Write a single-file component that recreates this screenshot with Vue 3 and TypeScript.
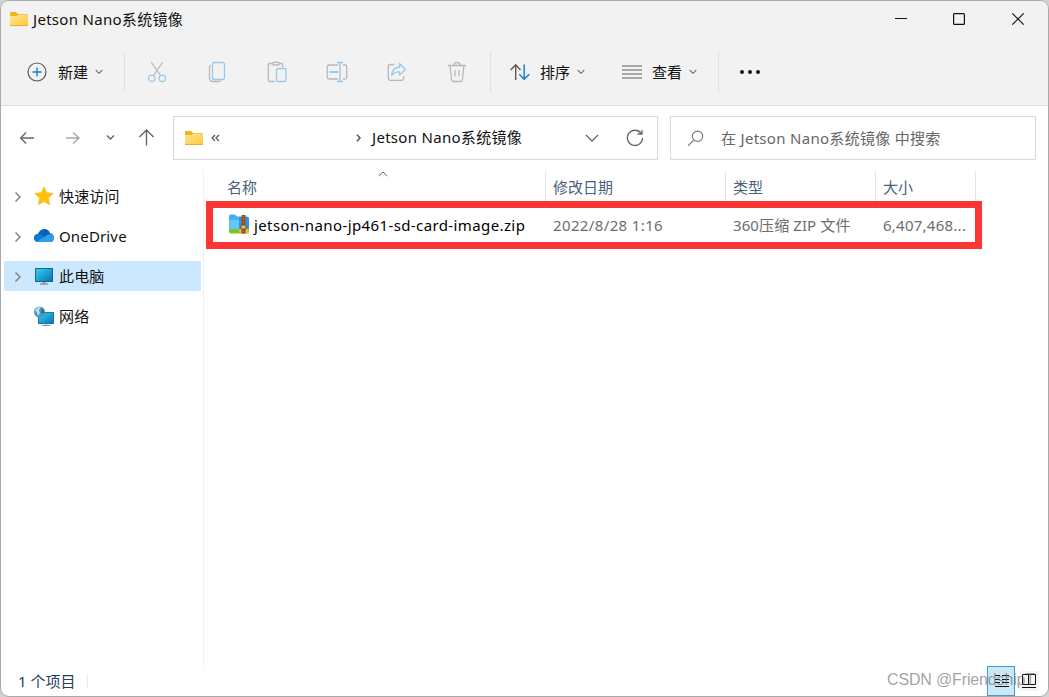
<script setup lang="ts">
interface Place {
  id: string
  label: string
  expandable: boolean
  selected?: boolean
}

const places: Place[] = [
  { id: 'star', label: '快速访问', expandable: true },
  { id: 'cloud', label: 'OneDrive', expandable: true },
  { id: 'pc', label: '此电脑', expandable: true, selected: true },
  { id: 'network', label: '网络', expandable: false },
]
</script>

<template>
  <div class="window">
    <header class="header">
      <div class="titlebar">
        <svg class="folder" width="18" height="16" viewBox="0 0 18 16">
          <path d="M0 2Q0 1 1 1H6L8 3H17Q18 3 18 4V14Q18 15 17 15H1Q0 15 0 14Z" fill="#f5b01d" />
          <path d="M0 5H6.500L8.500 3.500H18V14H0Z" fill="url(#folderFill)" />
          <path d="M0 14.500H18" stroke="#e9ad30" />
          <defs>
            <linearGradient id="folderFill" x1="0" y1="0" x2="1" y2="1">
              <stop offset="0" stop-color="#ffe79a" />
              <stop offset="1" stop-color="#ffc93a" />
            </linearGradient>
          </defs>
        </svg>
        <span class="title wide">Jetson Nano系统镜像</span>
        <svg class="controls" width="140" height="20" viewBox="0 0 140 20" fill="none" stroke="#111" stroke-width="1.200">
          <path d="M5 9.500H17" />
          <rect x="63.600" y="4.600" width="10.800" height="10.800" rx="1" />
          <path d="M122.300 4.300L133.700 15.700M133.700 4.300L122.300 15.700" />
        </svg>
      </div>
      <div class="toolbar">
        <div class="group new">
          <svg width="20" height="20" viewBox="0 0 20 20" fill="none">
            <circle cx="10" cy="10" r="9" stroke="#5b5b5b" stroke-width="1.200" />
            <path d="M10 5.500V14.500M5.500 10H14.500" stroke="#0f78cf" stroke-width="1.300" />
          </svg>
          <span>新建</span>
          <svg class="caret" width="8" height="6" viewBox="0 0 8 6"><path d="M.7 1L4 4.400L7.300 1" /></svg>
        </div>
        <i class="rule"></i>
        <div class="actions">
          <svg width="20" height="22" viewBox="0 0 20 22" fill="none" stroke-width="1.300">
            <path d="M4.200 1L13.500 14.500M15.800 1L6.500 14.500" stroke="#b9b9b9" />
            <g stroke="#98c9ed"><circle cx="4.700" cy="17.300" r="3.200" /><circle cx="15.300" cy="17.300" r="3.200" /></g>
          </svg>
          <svg width="20" height="22" viewBox="0 0 20 22" fill="none" stroke-width="1.300">
            <path d="M4 4Q2.500 4.500 2.500 6.500V17Q2.500 20.500 6 20.500H12Q13.500 20.500 14 19.500" stroke="#b9b9b9" />
            <rect x="5.500" y="1.500" width="12" height="17" rx="2" stroke="#98c9ed" />
          </svg>
          <svg width="20" height="22" viewBox="0 0 20 22" fill="none" stroke-width="1.300">
            <path d="M6 2.500H2.500Q1.300 2.500 1.300 4V19Q1.300 20.500 2.500 20.500H7.500M12 2.500H14.500Q15.700 2.500 15.700 4V6" stroke="#b9b9b9" />
            <rect x="5.500" y="1.300" width="7" height="2.700" rx="1.300" stroke="#b9b9b9" />
            <rect x="9.500" y="7.500" width="9.500" height="13" rx="1.500" stroke="#98c9ed" />
          </svg>
          <svg width="22" height="22" viewBox="0 0 22 22" fill="none" stroke-width="1.300">
            <path d="M12 4H3Q1.300 4 1.300 5.500V16.500Q1.300 18 3 18H12M17 4H19Q20.700 4 20.700 5.500V16.500Q20.700 18 19 18H17" stroke="#b9b9b9" />
            <path d="M14 1.500V20.500M11 1.500H17M11 20.500H17" stroke="#98c9ed" stroke-width="1.400" />
            <path d="M3.500 11H12" stroke="#98c9ed" stroke-width="2" />
          </svg>
          <svg width="20" height="22" viewBox="0 0 20 22" fill="none" stroke-width="1.300" stroke-linejoin="round">
            <path d="M7.500 3.500H3.500Q1.300 3.500 1.300 5.500V17Q1.300 19.300 3.500 19.300H14.500Q16.700 19.300 16.700 17V15" stroke="#b9b9b9" />
            <path d="M12.500 2.500L18.500 8.500L12.500 14V10.800Q8 10.500 4.700 14.500Q5.300 6.500 12.500 6Z" stroke="#98c9ed" />
          </svg>
          <svg width="20" height="22" viewBox="0 0 20 22" fill="none" stroke="#b9b9b9" stroke-width="1.300">
            <path d="M1 4.500H19M7 4Q7 1.500 10 1.500Q13 1.500 13 4M3 4.500L4.500 18.500Q4.700 20.500 6.500 20.500H13.500Q15.300 20.500 15.500 18.500L17 4.500M8 9V15.500M12 9V15.500" />
          </svg>
        </div>
        <i class="rule"></i>
        <div class="group sort">
          <svg width="20" height="20" viewBox="0 0 20 20" fill="none" stroke-width="1.400">
            <path d="M5.700 18V3M.7 8L5.700 2.700L10.500 8" stroke="#5b5b5b" />
            <path d="M14.200 2.500V17.300M9.300 12.300L14.200 17.300L19.300 12.300" stroke="#0f78cf" />
          </svg>
          <span>排序</span>
          <svg class="caret" width="8" height="6" viewBox="0 0 8 6"><path d="M.7 1L4 4.400L7.300 1" /></svg>
        </div>
        <div class="group view">
          <svg width="20" height="14" viewBox="0 0 20 14" stroke="#5b5b5b" stroke-width="1.200">
            <path d="M0 1H20M0 5H20M0 9H20M0 13H20" />
          </svg>
          <span>查看</span>
          <svg class="caret" width="8" height="6" viewBox="0 0 8 6"><path d="M.7 1L4 4.400L7.300 1" /></svg>
        </div>
        <i class="rule"></i>
        <svg class="more" width="22" height="6" viewBox="0 0 22 6" fill="#191919">
          <circle cx="3" cy="3" r="2" /><circle cx="11" cy="3" r="2" /><circle cx="19" cy="3" r="2" />
        </svg>
      </div>
    </header>

    <nav class="navbar">
      <svg class="arrows" width="136" height="20" viewBox="0 0 136 20" fill="none" stroke-width="1.400">
        <path d="M6 4.500L.7 10L6 15.500M.7 10H14" stroke="#666" />
        <path d="M53 4.500L59 10L53 15.500M59 10H46" stroke="#a6a6a6" />
        <path d="M87 7.500L90.500 11L94 7.500" stroke="#666" />
        <path d="M119.500 9L126.500 2L133.500 9M126.500 2V17.500" stroke="#666" />
      </svg>
      <div class="address">
        <svg class="folder" width="18" height="16" viewBox="0 0 18 16">
          <path d="M0 2Q0 1 1 1H6L8 3H17Q18 3 18 4V14Q18 15 17 15H1Q0 15 0 14Z" fill="#f5b01d" />
          <path d="M0 5H6.500L8.500 3.500H18V14H0Z" fill="url(#folderFill)" />
          <path d="M0 14.500H18" stroke="#e9ad30" />
        </svg>
        <svg class="chevrons" width="150" height="10" viewBox="0 0 150 10" fill="none" stroke="#555" stroke-width="1.200">
          <path d="M4 2L1 5L4 8M8 2L5 5L8 8" />
          <path d="M146 1.800L149 5L146 8.200" stroke-width="1.500" />
        </svg>
        <span class="crumb wide">Jetson Nano系统镜像</span>
        <svg class="refresh" width="60" height="20" viewBox="0 0 60 20" fill="none" stroke="#666" stroke-width="1.300">
          <path d="M1 7L7 13L13 7" />
          <path d="M56 5.200A7.600 7.600 0 1 0 57.600 10M57 2V6H52.500" />
        </svg>
      </div>
      <div class="search">
        <svg width="17" height="17" viewBox="0 0 17 17" fill="none" stroke="#777" stroke-width="1.100">
          <circle cx="10.500" cy="6.300" r="5.200" /><path d="M6.800 10L1 15.800" />
        </svg>
        <span class="wide">在 Jetson Nano系统镜像 中搜索</span>
      </div>
    </nav>

    <div class="body">
      <aside class="sidebar">
        <div v-for="place in places" :key="place.id" class="place" :class="{ selected: place.selected }">
          <svg class="expander" width="8" height="12" viewBox="0 0 8 12">
            <path v-if="place.expandable" d="M1.500 1.500L6 6L1.500 10.500" fill="none" stroke="#858585" stroke-width="1.500" />
          </svg>
          <svg v-if="place.id === 'star'" class="glyph" width="20" height="20" viewBox="0 0 20 20">
            <path d="M10 1L12.700 6.700L19 7.500L14.400 12L15.600 18.500L10 15.400L4.400 18.500L5.600 12L1 7.500L7.300 6.700Z" fill="#ffc20c" stroke="#fdb813" stroke-width=".8" stroke-linejoin="round" />
          </svg>
          <svg v-else-if="place.id === 'cloud'" class="glyph" width="20" height="20" viewBox="0 0 20 20">
            <path d="M4 16Q0 15.500 0 12Q0 8.500 4 8Q6 3 10.500 3Q14.500 3 16 7Q20 8 20 12Q20 16 16 16Z" fill="#0c5fbd" />
            <path d="M4 16Q0 15.500 0 12Q0 8 4.500 7.700Q8 7.500 13 13L6 16Z" fill="#087bd2" />
            <path d="M3 15.600L12 10Q15 7 18 8.700Q20 10 20 12.500Q19.500 16 16 16H5Z" fill="#2d9eea" />
          </svg>
          <svg v-else-if="place.id === 'pc'" class="glyph" width="20" height="20" viewBox="0 0 20 20">
            <defs>
              <linearGradient id="screenFill" x1="0" y1="0" x2="1" y2="1">
                <stop offset="0" stop-color="#35d5e5" /><stop offset="1" stop-color="#086fbd" />
              </linearGradient>
            </defs>
            <rect x="1.500" y="2.500" width="17" height="13" fill="url(#screenFill)" stroke="#146b91" />
            <path d="M8.500 16H11.500V17.500H8.500Z" fill="#8d999f" /><path d="M6 18H14" stroke="#65737b" />
          </svg>
          <svg v-else class="glyph" width="20" height="20" viewBox="0 0 20 20">
            <rect x="4.500" y="6.500" width="15" height="11" fill="url(#screenFill)" stroke="#137eae" />
            <path d="M12 18V19.500M8 19.500H16" stroke="#88949b" />
            <circle cx="5.500" cy="6" r="5.500" fill="#4b97bd" />
            <path d="M1 4Q4 0 7 1L5 4L6 7L4 10L3 7Z" fill="#b8d9e6" /><path d="M8 2Q11 5 10 8L7 7Z" fill="#29729c" />
          </svg>
          <span>{{ place.label }}</span>
        </div>
      </aside>

      <main class="files">
        <svg class="sorted" width="10" height="6" viewBox="0 0 10 6"><path d="M.7 5L5 1L9.300 5" fill="none" stroke="#666" /></svg>
        <div class="columns">
          <span>名称</span><span>修改日期</span><span>类型</span><span>大小</span>
        </div>
        <div class="row">
          <svg class="archive" width="21" height="20" viewBox="0 0 21 20">
            <path d="M0 2Q0 .5 1.500 .5H6L8 2.500H18Q20 2.500 20 4.500V16H0Z" fill="#46aff2" />
            <path d="M0 6H20V16H0Z" fill="#65c7f8" />
            <path d="M10 3H18Q20 3 20 5V16H10Z" fill="#2e93e6" />
            <path d="M0 15H20V17Q20 19.500 18 19.500H2Q0 19.500 0 17Z" fill="#79c52e" />
            <path d="M10 15H20V17Q20 19.500 18 19.500H10Z" fill="#f2b632" />
            <rect x="12.500" y="1" width="4" height="18.500" fill="#965021" />
            <path d="M14.500 2V19" stroke="#b9783c" stroke-dasharray="1 1.500" />
            <rect x="12" y="11" width="5" height="4" rx="1" fill="#e5bd75" stroke="#713d1c" stroke-width=".8" />
          </svg>
          <span class="name">jetson-nano-jp461-sd-card-image.zip</span>
          <span class="date">2022/8/28 1:16</span>
          <span class="type">360压缩 ZIP 文件</span>
          <span class="size">6,407,468...</span>
        </div>
      </main>
    </div>

    <footer class="status">
      <span>1 个项目</span>
      <i class="tick"></i>
      <div class="modes">
        <svg class="mode active" width="28" height="30" viewBox="0 0 28 30" stroke="#111">
          <rect x=".5" y=".5" width="27" height="29" fill="#cbe8f6" stroke="#3a9fd3" />
          <path d="M8 9.500H13M15 9.500H22M8 13.500H13M15 13.500H22M8 16.500H13M15 16.500H22M8 20.500H22" />
        </svg>
        <svg class="mode" width="20" height="20" viewBox="0 0 20 20" fill="none" stroke="#111">
          <rect width="20" height="20" fill="#f5f5f5" stroke="none" />
          <path d="M3.500 3.500H9.500V13.500H3.500ZM9.500 3.500H16.500V13.500H9.500ZM3 16.500H17" />
        </svg>
      </div>
    </footer>
    <div class="watermark">CSDN @FriendshipT</div>
  </div>
</template>

<style>
body {
  background: #d2d2d2;
  overflow: hidden;
}
</style>

<style scoped>
.window {
  position: relative;
  box-sizing: border-box;
  width: 1049px;
  height: 697px;
  border: 1px solid #aaa;
  border-radius: 9px;
  background: #fff;
  overflow: hidden;
  display: flex;
  flex-direction: column;
  font: 15px/20px "Noto Sans", "Noto Sans CJK SC", sans-serif;
  color: #111;
}
svg { display: block; flex: none; }
span { white-space: nowrap; }
.wide { letter-spacing: .3px; }
.header { background: #f2f2f2; border-bottom: 1px solid #dedede; }
.titlebar { box-sizing: border-box; height: 38px; padding-bottom: 2px; display: flex; align-items: center; }
.titlebar .folder { margin-left: 9px; }
.title { margin-left: 5px; }
.controls { margin-left: auto; margin-right: 18px; }
.toolbar { height: 66px; display: flex; align-items: center; }
.group { display: flex; align-items: center; box-sizing: border-box; }
.group span { margin: 0 7px 0 10px; }
.new { width: 123px; padding-left: 26px; }
.new span { margin-left: 11px; }
.caret path { fill: none; stroke: #777; stroke-width: 1.1; }
.rule { width: 1px; height: 40px; background: #e0e0e0; }
.actions { display: grid; grid-template-columns: repeat(6, 60px); width: 360px; margin: 0 3px 0 2px; justify-items: center; align-items: center; }
.sort { width: 112px; margin-left: 19px; }
.view { width: 96px; }
.more { margin-left: 20px; }
.navbar { height: 64px; display: flex; align-items: center; }
.arrows { margin-left: 19px; }
.address, .search { box-sizing: border-box; height: 44px; border: 1px solid #d9d9d9; display: flex; align-items: center; }
.address { width: 485px; margin-left: 17px; padding-left: 11px; }
.chevrons { margin-left: 8px; }
.crumb { margin-left: 11px; padding-bottom: 2px; }
.refresh { margin-left: auto; margin-right: 12px; }
.search { width: 366px; margin-left: 12px; padding-left: 16px; color: #666; }
.search span { margin-left: 17px; }
.body { flex: 1; display: flex; min-height: 0; }
.sidebar { box-sizing: border-box; width: 203px; border-right: 1px solid #f0f0f0; padding: 11px 2px 0 3px; }
.place { height: 30px; margin-bottom: 10px; border-radius: 2px; display: flex; align-items: center; padding-left: 10px; letter-spacing: .15px; }
.expander { margin-top: 2px; }
.selected { background: #cce8ff; }
.glyph { margin-left: 12px; }
.place span { margin-left: 5px; }
.files { position: relative; width: 778px; }
.sorted { position: absolute; left: 174px; top: 1px; }
.columns { margin-top: 1px; height: 30px; display: grid; grid-template-columns: 342px 180px 150px 100px; color: #4a607d; }
.columns span { border-right: 1px solid #e3e3e3; padding: 6px 0 0 7px; }
.columns span:first-child { padding-left: 23px; }
.row { box-sizing: border-box; width: 776px; height: 48px; margin-left: 2px; border: 7px solid #fc3635; display: flex; align-items: center; padding-left: 16px; color: #6d6d6d; }
.archive { margin-top: -2px; }
.name { width: 299px; margin-left: 4px; color: #000; letter-spacing: .39px; }
.date { width: 180px; letter-spacing: .37px; }
.type { width: 150px; letter-spacing: .1px; }
.size { letter-spacing: .25px; }
.status { height: 30px; display: flex; align-items: center; padding-left: 17px; color: #243f60; }
.tick { width: 1px; height: 14px; margin-left: 12px; background: #ececec; }
.modes { display: flex; align-items: center; gap: 4px; margin-left: auto; margin-right: 9px; }
.watermark { position: absolute; left: 886px; top: 669px; font: 16px/20px "Liberation Sans", Arial, sans-serif; letter-spacing: -.15px; color: rgba(110, 110, 110, .65); white-space: nowrap; }
</style>
